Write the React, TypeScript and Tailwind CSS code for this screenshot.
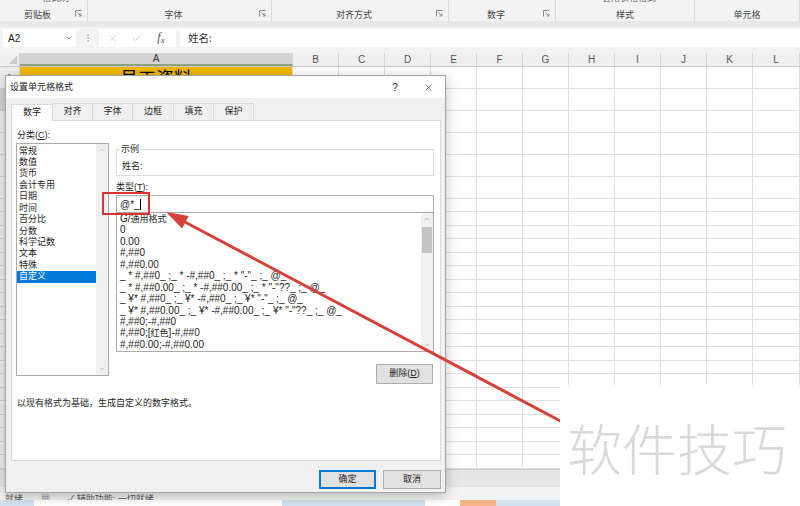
import { Check, ChevronDown, ChevronUp, EllipsisVertical, X } from 'lucide-react';

const GROUPS = [
  { label: '剪贴板', w: 'w-[88px]', launcher: true, top: '格式刷', topPad: 'pl-[42px]' },
  { label: '字体', w: 'w-[184px]', launcher: true, top: '', topPad: '' },
  { label: '对齐方式', w: 'w-[177px]', launcher: true, top: '', topPad: '' },
  { label: '数字', w: 'w-[107px]', launcher: true, top: '', topPad: '' },
  { label: '样式', w: 'w-[139px]', launcher: false, top: '套用表格格式', topPad: 'pl-[46px]' },
  { label: '单元格', w: 'w-[105px]', launcher: false, top: '', topPad: '' },
];

const COLS = [
  { id: 'A', w: 'w-[273px]' },
  { id: 'B', w: 'w-[46px]' },
  { id: 'C', w: 'w-[46px]' },
  { id: 'D', w: 'w-[46px]' },
  { id: 'E', w: 'w-[46px]' },
  { id: 'F', w: 'w-[46px]' },
  { id: 'G', w: 'w-[46px]' },
  { id: 'H', w: 'w-[46px]' },
  { id: 'I', w: 'w-[46px]' },
  { id: 'J', w: 'w-[46px]' },
  { id: 'K', w: 'w-[46px]' },
  { id: 'L', w: 'w-[47px]' },
];

const ROWS = Array.from({ length: 26 }, (_, i) =>
  i < 6 ? 'h-[22px]' : i % 2 === 0 ? 'h-[13px]' : 'h-[14px]'
);

const CATEGORIES = ['常规', '数值', '货币', '会计专用', '日期', '时间', '百分比', '分数', '科学记数', '文本', '特殊', '自定义'];

const FORMATS = [
  'G/通用格式',
  '0',
  '0.00',
  '#,##0',
  '#,##0.00',
  '_ * #,##0_ ;_ * -#,##0_ ;_ * "-"_ ;_ @_',
  '_ * #,##0.00_ ;_ * -#,##0.00_ ;_ * "-"??_ ;_ @_',
  '_ ¥* #,##0_ ;_ ¥* -#,##0_ ;_ ¥* "-"_ ;_ @_',
  '_ ¥* #,##0.00_ ;_ ¥* -#,##0.00_ ;_ ¥* "-"??_ ;_ @_',
  '#,##0;-#,##0',
  '#,##0;[红色]-#,##0',
  '#,##0.00;-#,##0.00',
];

const TABS = [
  { label: '数字', w: 'w-[42px]' },
  { label: '对齐', w: 'w-[41px]' },
  { label: '字体', w: 'w-[41px]' },
  { label: '边框', w: 'w-[42px]' },
  { label: '填充', w: 'w-[41px]' },
  { label: '保护', w: 'w-[41px]' },
];

function Launcher() {
  return (
    <svg width="7" height="7" viewBox="0 0 7 7" className="mb-[4px]">
      <path d="M0.5 6.5V0.5H6.5" fill="none" stroke="#8a8a8a" strokeWidth="1" />
      <path d="M2.5 2.5L6 6M6 3.5V6H3.5" fill="none" stroke="#8a8a8a" strokeWidth="1" />
    </svg>
  );
}

function Ribbon() {
  return (
    <div className="h-[21px] bg-[#f3f3f3] flex text-[9px] text-[#444]">
      {GROUPS.map((g) => (
        <div key={g.label} className={`${g.w} shrink-0 flex flex-col border-r border-[#dadada]`}>
          <div className={`h-[4px] overflow-hidden ${g.topPad}`}>
            <div className="-mt-[8px] leading-[12px] text-[#666]">{g.top}</div>
          </div>
          <div className="flex-1 flex items-end">
            <div className="flex-1 text-center leading-[12px]">{g.label}</div>
            {g.launcher && (
              <div className="w-[12px] flex justify-start">
                <Launcher />
              </div>
            )}
          </div>
        </div>
      ))}
    </div>
  );
}

function FormulaBar() {
  return (
    <div className="bg-[#f3f3f3]">
      <div className="h-[6px] bg-[#e8e8e8]" />
      <div className="h-[26px] flex pt-[2px]">
        <div className="ml-[3px] w-[73px] h-[18px] bg-white flex items-center justify-between pl-[5px] pr-[3px] text-[10px] text-[#222]">
          <span>A2</span>
          <ChevronDown size={8} color="#666" strokeWidth={2} />
        </div>
        <div className="w-[23px] h-[18px] flex items-center justify-center">
          <EllipsisVertical size={10} color="#a8a8a8" />
        </div>
        <div className="w-[77px] h-[18px] bg-white flex items-center text-[#b8b8b8]">
          <div className="w-[26px] flex justify-center pl-[1px]">
            <X size={11} strokeWidth={1.3} />
          </div>
          <div className="w-[24px] flex justify-center">
            <Check size={12} strokeWidth={1.3} />
          </div>
          <div className="w-[24px] flex justify-center font-['Liberation_Serif',serif] italic text-[#555] text-[12px] leading-[12px]">
            f<span className="text-[9px] mt-[3px]">x</span>
          </div>
        </div>
        <div className="ml-[4px] flex-1 h-[18px] bg-white flex items-center pl-[8px] text-[10.5px] text-[#333] font-['Noto_Sans_CJK_SC',sans-serif]">
          姓名:
        </div>
      </div>
    </div>
  );
}

function Sheet() {
  return (
    <div className="flex flex-col">
      <div className="h-[14px] flex bg-[#efefef] border-b border-[#c9c9c9] text-[10px] text-[#555]">
        <div className="w-[20px] shrink-0 border-r border-[#d0d0d0] flex items-end justify-end pr-[2px] pb-[2px]">
          <svg width="8" height="8" viewBox="0 0 8 8">
            <polygon points="8,0 8,8 0,8" fill="#c6c6c6" />
          </svg>
        </div>
        {COLS.map((c, i) => (
          <div
            key={c.id}
            className={`${c.w} shrink-0 flex items-center justify-center leading-[12px] border-r border-[#d4d4d4] ${
              i === 0 ? 'bg-[#d3d3d3] border-b-2 border-b-[#8ea37f] text-[#333]' : ''
            }`}
          >
            {c.id}
          </div>
        ))}
      </div>
      {ROWS.map((h, r) => (
        <div key={r} className={`flex ${h}`}>
          <div
            className={`w-[20px] shrink-0 border-r border-b border-[#d4d4d4] text-[9px] text-[#555] flex items-center justify-center ${
              r === 1 ? 'bg-[#d3d3d3]' : 'bg-[#efefef]'
            }`}
          >
            {r + 1}
          </div>
          {COLS.map((c, ci) => (
            <div
              key={c.id}
              className={`${c.w} shrink-0 border-r border-b border-[#dfdfdf] ${
                r === 0 && ci === 0
                  ? 'bg-[#f2b800] flex items-center justify-center text-[18px] text-black font-["Noto_Sans_CJK_SC",sans-serif]'
                  : ''
              }`}
            >
              {r === 0 && ci === 0 ? '员工资料' : null}
            </div>
          ))}
        </div>
      ))}
      <div className="h-[18px] bg-[#e6e6e6] border-t border-[#cfcfcf]" />
      <div className="h-[13px] bg-[#f3f3f3] overflow-hidden flex items-start gap-[18px] pl-[5px] pt-[6px] text-[9px] leading-[12px] text-[#555]">
        <span>就绪</span>
        <span>▦</span>
        <span>✓ 辅助功能: 一切就绪</span>
      </div>
      <div className="h-[6px] flex">
        <div className="w-[34px] bg-[#d2e3ef]" />
        <div className="w-[248px] bg-white" />
        <div className="w-[143px] bg-[#d2e3ef]" />
        <div className="w-[35px] bg-white" />
        <div className="w-[36px] bg-[#f5b486]" />
        <div className="flex-1 bg-[#d2e3ef]" />
      </div>
    </div>
  );
}

function ScrollArrows({ thumb }: { thumb: boolean }) {
  return (
    <div className="w-[12px] shrink-0 bg-[#f0f0f0] flex flex-col">
      <div className="h-[12px] flex items-center justify-center">
        <ChevronUp size={8} color="#9a9a9a" strokeWidth={1.6} />
      </div>
      {thumb && <div className="mt-[2px] mx-[1px] h-[26px] bg-[#c3c3c3]" />}
      <div className="flex-1" />
      <div className="h-[12px] flex items-center justify-center">
        <ChevronDown size={8} color="#9a9a9a" strokeWidth={1.6} />
      </div>
    </div>
  );
}

function FormatItem({ text }: { text: string }) {
  const parts = text.split(/(通用格式|红色)/);
  return (
    <div className="h-[11.45px] leading-[11.45px] whitespace-pre">
      {parts.map((p, i) =>
        p === '通用格式' || p === '红色' ? (
          <span key={i} className="text-[9px]">
            {p}
          </span>
        ) : (
          <span key={i}>{p}</span>
        )
      )}
    </div>
  );
}

function Dialog() {
  return (
    <div className="absolute left-[5px] top-[75px] w-[441px] h-[418px] border border-[#a3a3a3] bg-[#f0f0f0] shadow-[0_3px_12px_rgba(0,0,0,0.25)] flex flex-col text-[9px] text-[#1e1e1e]">
      <div className="h-[22px] bg-white flex items-center pl-[4px]">
        <span className="leading-[12px]">设置单元格格式</span>
        <span className="ml-auto w-[12px] text-center text-[10px]">?</span>
        <span className="ml-[21px] mr-[11px] w-[12px] flex justify-center">
          <X size={11} strokeWidth={1.2} color="#222" />
        </span>
      </div>

      <div className="pl-[5px] pt-[5px]">
        <div className="flex items-end">
          {TABS.map((t, i) => (
            <div
              key={t.label}
              className={`${t.w} h-[17px] flex items-center justify-center border border-[#d9d9d9] ${
                i === 0 ? 'bg-white border-b-white -mb-px relative z-10' : 'bg-[#f0f0f0] border-b-0 -ml-px'
              }`}
            >
              {t.label}
            </div>
          ))}
        </div>

        <div className="w-[430px] h-[341px] bg-white border border-[#d9d9d9] pt-[7px] pl-[4px]">
          <div className="flex items-start">
            <div className="w-[93px] shrink-0">
              <div className="h-[14px] leading-[14px] pl-[1px]">
                分类(<span className="underline">C</span>):
              </div>
              <div className="mt-[1px] h-[233px] border border-[#ababab] flex">
                <div className="flex-1 pt-[1.5px]">
                  {CATEGORIES.map((c) => (
                    <div
                      key={c}
                      className={`h-[11.45px] leading-[11.45px] pl-[2px] ${
                        c === '自定义' ? 'bg-[#0078d7] text-white' : ''
                      }`}
                    >
                      {c}
                    </div>
                  ))}
                </div>
                <ScrollArrows thumb={false} />
              </div>
            </div>

            <div className="ml-[7px] w-[318px] shrink-0 flex flex-col">
              <fieldset className="mt-[15px] h-[33px] border border-[#dcdcdc] pl-[3px]">
                <legend className="px-[1px] leading-[12px] text-[#333]">示例</legend>
                <div className="mt-[5px] leading-[12px] pl-[2px]">姓名:</div>
              </fieldset>
              <div className="mt-[5px] leading-[12px]">
                类型(<span className="underline">T</span>):
              </div>
              <div className="mt-[2px] h-[18px] border border-[#ababab] bg-white flex items-center pl-[3px] text-[10px]">
                <span>@*_</span>
                <span className="w-px h-[11px] bg-black" />
              </div>
              <div className="h-[139px] border border-[#ababab] border-t-0 flex text-[10px]">
                <div className="flex-1 pl-[3px] overflow-hidden">
                  {FORMATS.map((f) => (
                    <FormatItem key={f} text={f} />
                  ))}
                </div>
                <ScrollArrows thumb />
              </div>
              <div className="mt-[12px] self-end mr-[1px] w-[57px] h-[20px] bg-[#e1e1e1] border border-[#adadad] flex items-center justify-center">
                删除(<span className="underline">D</span>)
              </div>
            </div>
          </div>
          <div className="mt-[13px] leading-[12px] pl-[1px]">以现有格式为基础，生成自定义的数字格式。</div>
        </div>
      </div>

      <div className="mt-[9px] flex justify-end gap-[7px] pr-[4px]">
        <div className="w-[57px] h-[19px] bg-[#e1e1e1] border-2 border-[#0078d7] flex items-center justify-center">确定</div>
        <div className="w-[58px] h-[19px] bg-[#e1e1e1] border border-[#adadad] flex items-center justify-center">取消</div>
      </div>
    </div>
  );
}

function Annotation() {
  return (
    <svg className="absolute left-0 top-0 pointer-events-none" width="800" height="506" viewBox="0 0 800 506">
      <rect x="103" y="193" width="46" height="21" fill="none" stroke="#d9362f" strokeWidth="2" />
      <line x1="184" y1="221.5" x2="566" y2="424" stroke="#d8403a" strokeWidth="3" />
      <polygon points="166,212 182.1,228.5 188.7,216.1" fill="#d8403a" />
    </svg>
  );
}

export default function App() {
  return (
    <div className="relative w-[800px] h-[506px] overflow-hidden bg-white font-['Liberation_Sans','Noto_Sans_CJK_SC',sans-serif]">
      <Ribbon />
      <FormulaBar />
      <Sheet />
      <Dialog />
      <Annotation />
      <div className="absolute left-[560px] top-[385px] right-0 bottom-0 bg-white flex items-center pl-[7px]">
        <span className="text-[55px] leading-[60px] text-[#d9d9d9] font-['Noto_Sans_CJK_SC',sans-serif] font-light">
          软件技巧
        </span>
      </div>
    </div>
  );
}
